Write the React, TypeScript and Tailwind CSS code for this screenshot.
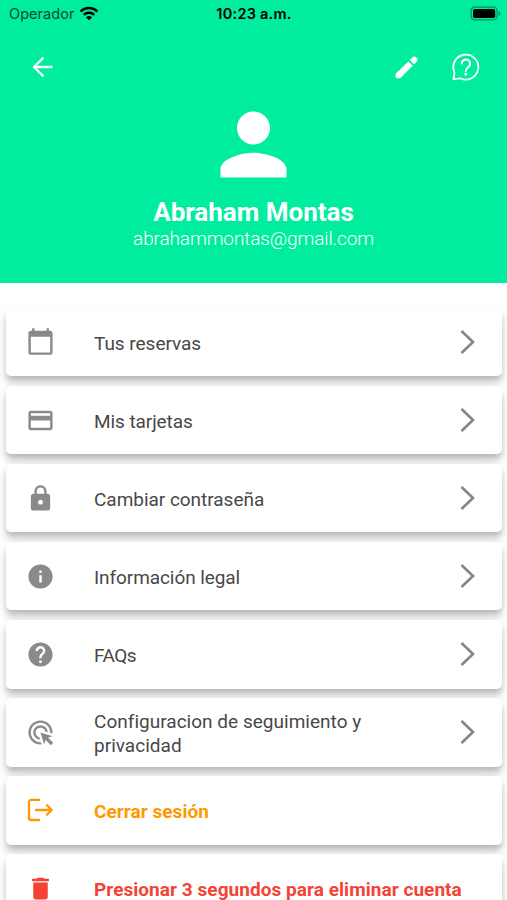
import type { ReactNode } from "react";
import {
  MdAdsClick,
  MdCalendarToday,
  MdCreditCard,
  MdDelete,
  MdHelp,
  MdInfo,
  MdLock,
  MdPerson,
} from "react-icons/md";

type Item = {
  label: ReactNode;
  icon: ReactNode;
  tone?: string;
  tracking: string;
  chevron?: boolean;
};

const LogoutIcon = () => (
  <svg width="29" height="29" viewBox="0 0 29 29" fill="none" stroke="currentColor" strokeWidth="2.3" strokeLinecap="round" strokeLinejoin="round">
    <path d="M13.2 3.9H5A2 2 0 0 0 3 5.9V22a2 2 0 0 0 2 2h8.2" />
    <path d="M10 14h15.5M20.9 9.200l4.800 4.800-4.800 4.800" />
  </svg>
);

const ITEMS: Item[] = [
  { label: "Tus reservas", icon: <MdCalendarToday size={29} />, tracking: "tracking-[-0.03px]", chevron: true },
  { label: "Mis tarjetas", icon: <MdCreditCard size={29} />, tracking: "tracking-[-0.08px]", chevron: true },
  { label: "Cambiar contraseña", icon: <MdLock size={29} />, tracking: "tracking-[-0.03px]", chevron: true },
  { label: "Información legal", icon: <MdInfo size={29} />, tracking: "tracking-[-0.08px]", chevron: true },
  { label: "FAQs", icon: <MdHelp size={29} />, tracking: "tracking-[-0.5px]", chevron: true },
  {
    label: (
      <>
        Configuracion de seguimiento y
        <br />
        privacidad
      </>
    ),
    icon: <MdAdsClick size={29} />,
    tracking: "tracking-[0.02px]",
    chevron: true,
  },
  { label: "Cerrar sesión", icon: <LogoutIcon />, tone: "text-[#ff9800]", tracking: "tracking-[0.05px]" },
  { label: "Presionar 3 segundos para eliminar cuenta", icon: <MdDelete size={29} />, tone: "text-[#f44336]", tracking: "tracking-[0.05px]" },
];

function StatusBar() {
  return (
    <div className="grid grid-cols-3 items-center h-[27px] pl-[9px] pr-[6px] font-['Inter','Liberation_Sans',sans-serif] text-black">
      <div className="flex items-center gap-[5px]">
        <span className="text-[14.5px] text-[#064a33] tracking-[0.05px]">Operador</span>
        <svg width="20" height="15" viewBox="0 0 20 15" fill="none" stroke="currentColor" strokeWidth="2.5">
          <path d="M1.5 5.5C6.300 .9 13.7 .9 18.5 5.5" />
          <path d="M4.7 8.9c3-2.800 7.600-2.800 10.600 0" />
          <path d="M7 11.2q3-2.400 6 0L10 14.300z" fill="currentColor" stroke="none" />
        </svg>
      </div>
      <span className="-ml-[2px] text-center text-[14.5px] font-semibold tracking-[0.25px] whitespace-nowrap">10:23 a.m.</span>
      <svg className="justify-self-end" width="31" height="15" viewBox="0 0 31 15">
        <rect x="1.1" y="1.1" width="26" height="12.8" rx="3.8" fill="none" stroke="#000" strokeOpacity=".4" strokeWidth="1.2" />
        <rect x="3" y="3" width="22.2" height="9" rx="1.8" fill="#000" />
        <path d="M28.6 5.2v4.600c1-.4 1.600-1.300 1.600-2.300s-.6-1.900-1.600-2.300z" fill="#000" fillOpacity=".45" />
      </svg>
    </div>
  );
}

function Toolbar() {
  return (
    <div className="flex items-center h-[80px] pl-[31px] pr-[26px] text-white">
      <svg width="24" height="24" viewBox="0 0 24 24" fill="none" stroke="currentColor" strokeWidth="2.4" strokeLinecap="round" strokeLinejoin="round">
        <path d="M20.500 12H3M11.700 3.300L3 12l8.700 8.700" />
      </svg>
      <div className="flex items-center ml-auto gap-[31px]">
        <svg width="26" height="26" viewBox="0 0 26 26" fill="currentColor">
          <path d="M1.600 20.400v2.600c0 .8.600 1.300 1.300 1.300h2.700c.4 0 .8-.1 1.100-.5L18.700 11.700l-4.300-4.300L2.100 19.200c-.3.300-.5.700-.5 1.200z" />
          <path d="M15.700 6.100l4.300 4.300 2.900-2.900c1-1 1-2.500 0-3.500l-.8-.8c-1-1-2.500-1-3.500 0z" />
        </svg>
        <svg width="30" height="30" viewBox="0 0 30 30" fill="none" stroke="currentColor" strokeWidth="1.8" strokeLinecap="round" strokeLinejoin="round">
          <path d="M2.500 27.300L3.500 20.500A12.500 12.500 0 1 1 9.200 26.300z" />
          <path d="M10.700 11.600a4.200 4.200 0 1 1 6.600 3.500c-1.700 1.100-2.500 1.900-2.500 4" strokeWidth="2" />
          <circle cx="14.800" cy="22" r=".6" fill="currentColor" />
        </svg>
      </div>
    </div>
  );
}

function Row({ label, icon, tone, tracking, chevron }: Item) {
  return (
    <li className="flex items-center h-[68.5px] shrink-0 rounded-[5px] bg-white pl-[20px] pr-[25px] shadow-[0_4px_5px_-1px_rgba(0,0,0,0.13),0_8px_8px_rgba(0,0,0,0.14),0_4px_12px_rgba(0,0,0,0.06)]">
      <span className={`w-[68.5px] shrink-0 ${tone ?? "text-[#8a8a8a]"}`}>{icon}</span>
      <span className={`pt-[3px] text-[19px] leading-[23.5px] whitespace-nowrap ${tracking} ${tone ? `${tone} font-bold` : "text-[#484848] font-normal"}`}>
        {label}
      </span>
      {chevron && (
        <svg className="ml-auto" width="18" height="26" viewBox="0 0 18 26" fill="none" stroke="#878787" strokeWidth="2.7">
          <path d="M2.500 2L14 13 2.500 24" />
        </svg>
      )}
    </li>
  );
}

export default function App() {
  return (
    <main className="flex flex-col w-[507px] h-[900px] overflow-hidden bg-white font-['Roboto','Noto_Sans',sans-serif]">
      <header className="h-[282.5px] shrink-0 bg-[#00ed9f]">
        <StatusBar />
        <Toolbar />
        <div className="flex flex-col items-center text-white">
          <MdPerson size={99} className="-mt-[12px]" />
          <h1 className="mt-[3px] text-[26px] leading-[31px] font-bold whitespace-nowrap">Abraham Montas</h1>
          <p className="-mt-px text-[19px] leading-[23px] font-light tracking-[-0.12px] whitespace-nowrap">abrahammontas@gmail.com</p>
        </div>
      </header>
      <ul className="flex flex-col gap-[9.6px] pt-[25.2px] px-[5.5px]">
        {ITEMS.map((item, i) => (
          <Row key={i} {...item} />
        ))}
      </ul>
    </main>
  );
}
